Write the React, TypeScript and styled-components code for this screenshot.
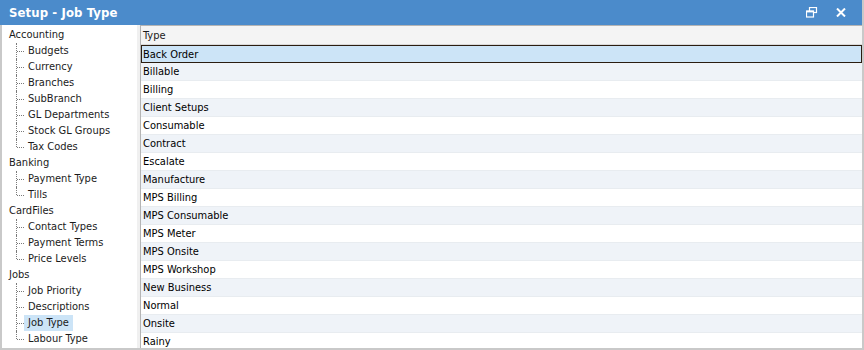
import React from "react";
import styled, { createGlobalStyle } from "styled-components";

const GlobalStyle = createGlobalStyle`
  html, body { margin: 0; padding: 0; background: #ffffff; overflow: hidden; }
  body { font-family: "DejaVu Sans Condensed", "Liberation Sans", sans-serif; font-size: 11px; color: #1b1b1b; }
`;

const Window = styled.div`
  width: 864px;
  height: 350px;
  display: flex;
  flex-direction: column;
  box-sizing: border-box;
`;

const TitleBar = styled.div`
  height: 25px;
  background: #4b8bcb;
  display: flex;
  align-items: center;
  padding: 0 12px 0 9px;
  color: #ffffff;
  border-right: 2px solid #c9c9c9;
`;

const Title = styled.div`
  flex: 1;
  font-family: "DejaVu Sans Condensed", "Liberation Sans", sans-serif;
  font-weight: bold;
  font-size: 13px;
  letter-spacing: 0.1px;
`;

const TitleButton = styled.div`
  width: 18px;
  height: 18px;
  display: flex;
  align-items: center;
  justify-content: center;
  margin-left: 11px;
`;

const Body = styled.div`
  flex: 1;
  display: flex;
  min-height: 0;
  border: 2px solid #c9c9c9;
  border-top: none;
`;

const Tree = styled.div`
  width: 135px;
  background: #ffffff;
  padding-top: 2px;
  overflow: hidden;
`;

const Splitter = styled.div`
  width: 3px;
  background: #f0f0f0;
`;

const TreeRow = styled.div<{ $child?: boolean; $last?: boolean }>`
  position: relative;
  height: 16px;
  line-height: 16px;
  padding-left: ${(p) => (p.$child ? 22 : 7)}px;
  white-space: nowrap;
  ${(p) =>
    p.$child &&
    `
    &::before {
      content: "";
      position: absolute;
      left: 14px;
      top: 0;
      height: ${p.$last ? 8 : 16}px;
      border-left: 1px dotted #7a7a7a;
    }
    &::after {
      content: "";
      position: absolute;
      left: 15px;
      top: 8px;
      width: 7px;
      border-top: 1px dotted #7a7a7a;
    }
  `}
`;

const TreeLabel = styled.span<{ $selected?: boolean; $child?: boolean }>`
  display: inline-block;
  padding: 0 ${(p) => (p.$child ? 4 : 0)}px;
  background: ${(p) => (p.$selected ? "#cce4f7" : "transparent")};
`;

const Grid = styled.div`
  flex: 1;
  display: flex;
  flex-direction: column;
  border: 1px solid #b4b4b4;
  border-bottom: none;
  border-right: none;
  overflow: hidden;
`;

const HeaderCell = styled.div`
  height: 18px;
  line-height: 19px;
  padding-left: 2px;
  background: #f4f4f4;
  border-bottom: 1px solid #d9d9d9;
  color: #1b1b1b;
`;

const Row = styled.div<{ $alt?: boolean; $selected?: boolean }>`
  height: 18px;
  line-height: 17px;
  box-sizing: border-box;
  padding-left: ${(p) => (p.$selected ? 1 : 2)}px;
  background: ${(p) => (p.$selected ? "#cce4f7" : p.$alt ? "#eff3f8" : "#ffffff")};
  border: ${(p) => (p.$selected ? "1px solid #2b1d10" : "none")};
  border-bottom: ${(p) => (p.$selected ? "1px solid #2b1d10" : "1px solid #e8ecf0")};
  color: #000000;
  white-space: nowrap;
`;

const tree: { label: string; children: string[] }[] = [
  { label: "Accounting", children: ["Budgets", "Currency", "Branches", "SubBranch", "GL Departments", "Stock GL Groups", "Tax Codes"] },
  { label: "Banking", children: ["Payment Type", "Tills"] },
  { label: "CardFiles", children: ["Contact Types", "Payment Terms", "Price Levels"] },
  { label: "Jobs", children: ["Job Priority", "Descriptions", "Job Type", "Labour Type"] },
];

const types = [
  "Back Order", "Billable", "Billing", "Client Setups", "Consumable", "Contract", "Escalate",
  "Manufacture", "MPS Billing", "MPS Consumable", "MPS Meter", "MPS Onsite", "MPS Workshop",
  "New Business", "Normal", "Onsite", "Rainy",
];

const RestoreIcon = () => (
  <svg width="12" height="11" viewBox="0 0 12 11">
    <rect x="3.5" y="0.5" width="7" height="5" fill="none" stroke="#fff" strokeWidth="1.2" />
    <rect x="0.5" y="4" width="7" height="6" fill="#4b8bcb" stroke="#fff" strokeWidth="1.2" />
    <line x1="0.5" y1="4.6" x2="7.5" y2="4.6" stroke="#fff" strokeWidth="1.6" />
  </svg>
);

const CloseIcon = () => (
  <svg width="10" height="9" viewBox="0 0 10 9">
    <path d="M1 0.5 L9 8.5 M9 0.5 L1 8.5" stroke="#fff" strokeWidth="2" />
  </svg>
);

export default function App() {
  return (
    <>
      <GlobalStyle />
      <Window>
        <TitleBar>
          <Title>Setup - Job Type</Title>
          <TitleButton><RestoreIcon /></TitleButton>
          <TitleButton><CloseIcon /></TitleButton>
        </TitleBar>
        <Body>
          <Tree>
            {tree.map((group) => (
              <React.Fragment key={group.label}>
                <TreeRow><TreeLabel>{group.label}</TreeLabel></TreeRow>
                {group.children.map((c, i) => (
                  <TreeRow key={c} $child $last={i === group.children.length - 1}>
                    <TreeLabel $child $selected={c === "Job Type"}>{c}</TreeLabel>
                  </TreeRow>
                ))}
              </React.Fragment>
            ))}
          </Tree>
          <Splitter />
          <Grid>
            <HeaderCell>Type</HeaderCell>
            {types.map((t, i) => (
              <Row key={t} $selected={i === 0} $alt={i % 2 === 1}>{t}</Row>
            ))}
          </Grid>
        </Body>
      </Window>
    </>
  );
}
